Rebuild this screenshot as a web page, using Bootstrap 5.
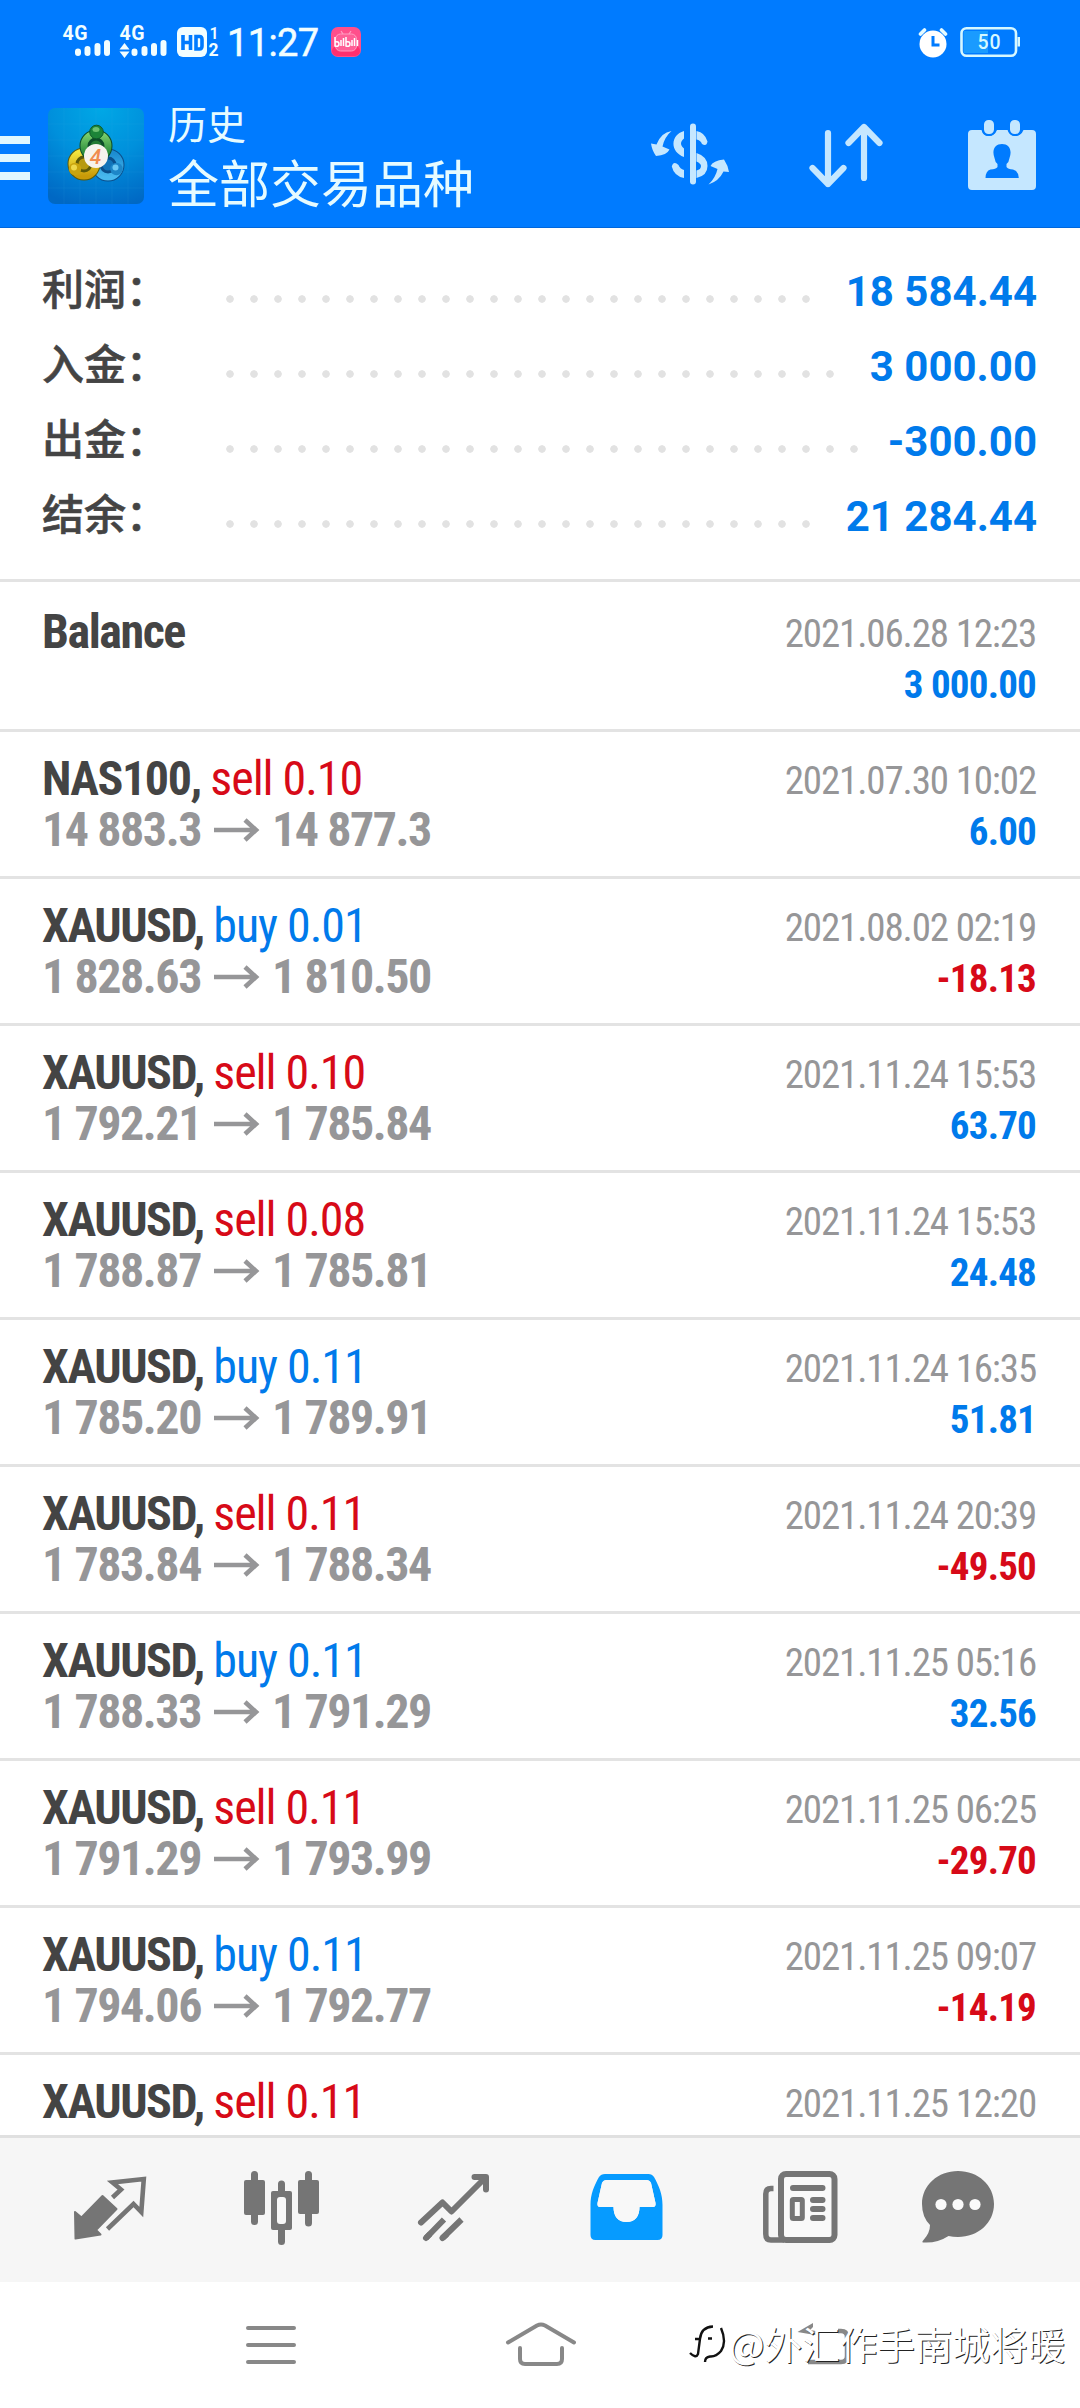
<!DOCTYPE html>
<html lang="zh-CN">
<head>
<meta charset="utf-8">
<meta name="viewport" content="width=device-width, initial-scale=1">
<title>历史</title>
<link href="https://cdn.jsdelivr.net/npm/bootstrap@5.3.0/dist/css/bootstrap.min.css" rel="stylesheet">
<style>
  body { width: 1080px; height: 2408px; overflow: hidden; background: #fff; font-family: Roboto, "Noto Sans CJK SC", sans-serif; }
  svg { display: block; flex: none; }
  .app-head { height: 228px; background: #007bff; border-bottom: 1px solid #0067dc; color: #e6fbff; }
  .status-strip { height: 84px; padding: 10px 56px 0 50px; }
  .tool-strip { height: 143px; }
  .head-text { margin: 10px 0 0 24px; font-family: "Noto Sans CJK SC", sans-serif; }
  .head-small { font-size: 39px; line-height: 56px; }
  .head-large { font-size: 51px; line-height: 62px; }
  .summary { height: 354px; padding: 26px 43px 0 42px; border-bottom: 3px solid #e3e3e3; }
  .sum-line { height: 75px; }
  .sum-label { width: 176px; font: 500 42px/66px "Noto Sans CJK SC", sans-serif; color: #444; -webkit-text-stroke: .6px #444; }
  .leader { height: 8px; margin-top: 41px; background: radial-gradient(circle, #e2e2e2 3.4px, transparent 4.1px) 0 0 / 24px 8px repeat-x; }
  .sum-val { font-size: 42px; line-height: 75px; font-weight: 700; color: #007aeb; }
  .deals { height: 1553px; overflow: hidden; font-family: "Roboto Condensed", Roboto, sans-serif; }
  .deal { padding: 21px 44px 18px 42px; border-bottom: 3px solid #e3e3e3; font-size: 48px; line-height: 51px; letter-spacing: -1.45px; }
  .deal:first-child { padding-top: 24px; }
  .deal-sym { height: 51px; color: #444; font-weight: 700; }
  .deal-sym span { font-weight: 400; letter-spacing: -1.05px; }
  .deal-px { height: 51px; color: #969698; font-weight: 700; }
  .deal-px svg { margin: 0 12px 0 13px; }
  .deal-side { padding-top: 3px; font-size: 39px; }
  .deal-time { color: #969698; letter-spacing: -1.15px; }
  .deal-sum { font-weight: 700; letter-spacing: -.8px; }
  .c-buy { color: #007aeb; }
  .c-sell { color: #d70a18; }
  .tabs { height: 147px; background: #f6f6f6; border-top: 3px solid #e0e0e0; padding: 30px 0 0 68px; }
  .sys-nav { height: 126px; padding-top: 38px; position: relative; }
  .wmark { position: absolute; left: 684px; top: 28px; font: 400 37.6px/66px "Noto Sans CJK SC", sans-serif; color: #fff; text-shadow: 1px 1px 0 #222; }
</style>
<script src="https://cdn.jsdelivr.net/npm/bootstrap@5.3.0/dist/js/bootstrap.bundle.min.js"></script>
</head>
<body>
<svg width="0" height="0" class="position-absolute"><defs>
  <symbol id="arr" viewBox="0 0 46 24"><path d="M0 12H42M31 2L42 12L31 22" fill="none" stroke="#969698" stroke-width="4.6"/></symbol>
</defs></svg>

<header class="app-head">
  <div class="status-strip d-flex justify-content-between">
    <svg width="315" height="60" viewBox="50 10 315 60" fill="#f2feff" font-family="Roboto">
      <text x="62.500" y="40" font-size="19.500" font-weight="700" textLength="25">4G</text>
      <path stroke="#f2feff" stroke-width="6" stroke-linecap="round" d="M78 51.500v1.500M87.500 49v4M97.500 46v7M107 43v10M134.500 51.500v1.500M144.500 49v4M154 46v7M163.500 43v10"/>
      <text x="119.500" y="40" font-size="19.500" font-weight="700" textLength="25">4G</text>
      <path d="M119.500 49.500L124.500 43L129.500 49.500zM119.500 51.500h10L124.500 58z"/>
      <rect x="177" y="27" width="30" height="30" rx="6"/>
      <path fill="none" stroke="#007bff" stroke-width="3.600" d="M183 35v15M190.500 35v15M183 42.500h7.500M196 36.500h3.500q2.500 0 2.500 3v6.500q0 3-2.500 3H196z"/>
      <text x="209.500" y="38.500" font-size="16" font-weight="600">1</text>
      <text x="208.500" y="56" font-size="17.500" font-weight="700">2</text>
      <text x="227" y="56" font-size="38" font-weight="400" stroke="#f2feff" stroke-width=".5" textLength="92">11:27</text>
      <rect x="331" y="27" width="30" height="30" rx="7" fill="#ff4f8b"/>
      <rect x="332" y="46" width="28" height="10" rx="5" fill="#ff2f6e"/>
      <rect x="335.500" y="34" width="21" height="17" rx="5" fill="#ff5f97" stroke="#ff9cc0" stroke-width="1"/>
      <path stroke="#ffa0c4" stroke-width="1.200" d="M341 31l2 3M351 31l-2 3"/>
      <path fill="none" stroke="#fff" stroke-width="1.500" d="M335 37v9q4 1 4-2t-4-2M341 40v6M343.500 38v8M346 37v9q4 1 4-2t-4-2M352 40v6M354.500 38v8M357.500 40v6"/>
    </svg>
    <svg width="106" height="60" viewBox="918 10 106 60" font-family="Roboto">
      <circle cx="933" cy="44" r="13.500" fill="#fff"/>
      <path d="M920.500 34l4-4M945.500 34l-4-4" stroke="#e6fbff" stroke-width="3.600" stroke-linecap="round"/>
      <path d="M933 36v9h6.500" fill="none" stroke="#007bff" stroke-width="3"/>
      <rect x="961.500" y="28.300" width="54.500" height="27.500" rx="5" fill="none" stroke="#d6f8ff" stroke-width="2.600"/>
      <path d="M963.500 31h24.500v22h-24.500z" fill="#1a9bff"/>
      <path d="M1017.500 37h2.500v9.500h-2.500z" fill="#d6f8ff"/>
      <text x="977.500" y="49" font-size="19.500" font-weight="500" fill="#d6f8ff" textLength="23">50</text>
    </svg>
  </div>
  <div class="tool-strip d-flex align-items-start">
    <svg width="30" height="44" viewBox="0 0 30 44" style="margin-top:52px"><path d="M0 0h30v8H0zM0 18h30v8H0zM0 36h30v8H0z" fill="#e0f7ff"/></svg>
    <svg width="96" height="96" viewBox="0 0 96 96" style="margin:24px 0 0 18px">
      <defs>
        <radialGradient id="lb" cx=".55" cy="0" r="1.050"><stop offset="0" stop-color="#00a8e6"/><stop offset=".5" stop-color="#0090dc"/><stop offset="1" stop-color="#0068c4"/></radialGradient>
        <linearGradient id="lg" x2="0" y2="1"><stop stop-color="#7ccf6c"/><stop offset="1" stop-color="#147a2e"/></linearGradient>
        <linearGradient id="ly" x2="0" y2="1"><stop stop-color="#f4e640"/><stop offset="1" stop-color="#c89a08"/></linearGradient>
        <linearGradient id="lc" x2="0" y2="1"><stop stop-color="#1c8cd0"/><stop offset="1" stop-color="#48b8ee"/></linearGradient>
      </defs>
      <rect width="96" height="96" rx="7" fill="url(#lb)"/>
      <path d="M16 0v96M32 0v96M48 0v96M64 0v96M80 0v96M0 16h96M0 32h96M0 48h96M0 64h96M0 80h96" stroke="#3cb8f0" stroke-opacity=".1"/>
      <circle cx="60" cy="57" r="11" fill="#1273b8" stroke="#0a4f8c" stroke-width="11"/>
      <circle cx="60" cy="57" r="12" fill="none" stroke="url(#lc)" stroke-width="7"/>
      <circle cx="36" cy="56" r="11" fill="#b79a10" stroke="#5d5a08" stroke-width="11"/>
      <circle cx="36" cy="56" r="12" fill="none" stroke="url(#ly)" stroke-width="7"/>
      <circle cx="48" cy="38" r="11" fill="#237a34" stroke="#0c4c28" stroke-width="11"/>
      <circle cx="48" cy="38" r="12" fill="none" stroke="url(#lg)" stroke-width="7"/>
      <circle cx="48.500" cy="24" r="6.800" fill="#1c8438" stroke="#0f5a2a"/>
      <ellipse cx="48" cy="21.500" rx="3.500" ry="2.500" fill="#6cc070"/>
      <circle cx="27" cy="61" r="6.200" fill="#c9a40e"/><circle cx="26" cy="59.500" r="3" fill="#eed84a"/>
      <circle cx="68.500" cy="61" r="6.200" fill="#1d86c8"/><circle cx="67.500" cy="59.500" r="3" fill="#6cc8f4"/>
      <circle cx="48" cy="48" r="12" fill="#f6f3ee"/>
      <text x="47.500" y="55.500" font-family="Roboto" font-weight="500" font-style="italic" font-size="21" text-anchor="middle" fill="#f08c50">4</text>
    </svg>
    <div class="head-text flex-grow-1">
      <div class="head-small">历史</div>
      <div class="head-large">全部交易品种</div>
    </div>
    <svg width="390" height="76" viewBox="650 118 390 76" style="margin:34px 40px 0 0" fill="#c5e7ff" stroke-linecap="round">
      <path d="M693 126.500V181.500" stroke="#c5e7ff" stroke-width="6"/>
      <path d="M684 131C670 135 670 152 684 157V148.500C680 145.500 680 141.500 684 138.500zM696.500 131Q705 132.500 707.500 141.500Q706.500 147 702 144Q700.500 140 696.500 139.500zM696.500 153Q707.500 156.500 707.500 166Q707.500 175.500 696.500 178V170.500Q701 169.500 701 166Q701 163.500 696.500 161.500zM684 178Q674 176 671.800 166.500Q673.500 160.500 678.500 165Q680 169 684 170z"/>
      <path d="M671.500 131Q664.500 137 662.500 146.500L669.500 149.500Q667 155 656 156Q652 150.500 651 143.500L656.500 144.500Q661 132.500 671.500 131zM708.500 184.500Q715.500 178 717.500 169L710.500 166Q713 160.500 724 159.500Q728 165.500 729 172L723.500 171.500Q719 181 708.500 184.500z"/>
      <path d="M828 133V184M812.500 168L828 184L843.500 168M864 178V127M848.500 143L864 127L879.500 143" fill="none" stroke="#c5e7ff" stroke-width="6.200" stroke-linejoin="round"/>
      <path d="M972 130H981.500Q983 136 988.500 136Q994.500 136 997 130H1007.500Q1010 136 1015.500 136Q1021 136 1023.500 130H1032Q1036 130 1036 134V186Q1036 190 1032 190H972Q968 190 968 186V134Q968 130 972 130z"/>
      <g stroke="#007bff" stroke-width="2"><rect x="983" y="119" width="12" height="16" rx="5.500"/><rect x="1009" y="119" width="12" height="16" rx="5.500"/></g>
      <path fill="#007bff" d="M1002 144C1009 144 1012.500 150 1009.500 158Q1009 162 1006.500 164V167Q1008 169 1013 169.500Q1018.500 171 1018.800 178H985.500Q985.500 171 990.500 169.500Q996 169 997.500 167V164Q995 162 994.500 158C991.500 150 995 144 1002 144z"/>
    </svg>
  </div>
</header>

<section class="summary">
  <div class="sum-line d-flex align-items-start"><div class="sum-label">利润：</div><div class="leader" style="width:600px"></div><div class="sum-val ms-auto">18 584.44</div></div>
  <div class="sum-line d-flex align-items-start"><div class="sum-label">入金：</div><div class="leader" style="width:624px"></div><div class="sum-val ms-auto">3 000.00</div></div>
  <div class="sum-line d-flex align-items-start"><div class="sum-label">出金：</div><div class="leader" style="width:648px"></div><div class="sum-val ms-auto">-300.00</div></div>
  <div class="sum-line d-flex align-items-start"><div class="sum-label">结余：</div><div class="leader" style="width:600px"></div><div class="sum-val ms-auto">21 284.44</div></div>
</section>

<main class="deals">
  <div class="deal d-flex justify-content-between"><div><div class="deal-sym">Balance</div><div class="deal-px"></div></div><div class="deal-side text-end"><div class="deal-time">2021.06.28 12:23</div><div class="deal-sum c-buy">3 000.00</div></div></div>
  <div class="deal d-flex justify-content-between"><div><div class="deal-sym">NAS100, <span class="c-sell">sell 0.10</span></div><div class="deal-px d-flex align-items-center">14 883.3<svg width="46" height="24"><use href="#arr"/></svg>14 877.3</div></div><div class="deal-side text-end"><div class="deal-time">2021.07.30 10:02</div><div class="deal-sum c-buy">6.00</div></div></div>
  <div class="deal d-flex justify-content-between"><div><div class="deal-sym">XAUUSD, <span class="c-buy">buy 0.01</span></div><div class="deal-px d-flex align-items-center">1 828.63<svg width="46" height="24"><use href="#arr"/></svg>1 810.50</div></div><div class="deal-side text-end"><div class="deal-time">2021.08.02 02:19</div><div class="deal-sum c-sell">-18.13</div></div></div>
  <div class="deal d-flex justify-content-between"><div><div class="deal-sym">XAUUSD, <span class="c-sell">sell 0.10</span></div><div class="deal-px d-flex align-items-center">1 792.21<svg width="46" height="24"><use href="#arr"/></svg>1 785.84</div></div><div class="deal-side text-end"><div class="deal-time">2021.11.24 15:53</div><div class="deal-sum c-buy">63.70</div></div></div>
  <div class="deal d-flex justify-content-between"><div><div class="deal-sym">XAUUSD, <span class="c-sell">sell 0.08</span></div><div class="deal-px d-flex align-items-center">1 788.87<svg width="46" height="24"><use href="#arr"/></svg>1 785.81</div></div><div class="deal-side text-end"><div class="deal-time">2021.11.24 15:53</div><div class="deal-sum c-buy">24.48</div></div></div>
  <div class="deal d-flex justify-content-between"><div><div class="deal-sym">XAUUSD, <span class="c-buy">buy 0.11</span></div><div class="deal-px d-flex align-items-center">1 785.20<svg width="46" height="24"><use href="#arr"/></svg>1 789.91</div></div><div class="deal-side text-end"><div class="deal-time">2021.11.24 16:35</div><div class="deal-sum c-buy">51.81</div></div></div>
  <div class="deal d-flex justify-content-between"><div><div class="deal-sym">XAUUSD, <span class="c-sell">sell 0.11</span></div><div class="deal-px d-flex align-items-center">1 783.84<svg width="46" height="24"><use href="#arr"/></svg>1 788.34</div></div><div class="deal-side text-end"><div class="deal-time">2021.11.24 20:39</div><div class="deal-sum c-sell">-49.50</div></div></div>
  <div class="deal d-flex justify-content-between"><div><div class="deal-sym">XAUUSD, <span class="c-buy">buy 0.11</span></div><div class="deal-px d-flex align-items-center">1 788.33<svg width="46" height="24"><use href="#arr"/></svg>1 791.29</div></div><div class="deal-side text-end"><div class="deal-time">2021.11.25 05:16</div><div class="deal-sum c-buy">32.56</div></div></div>
  <div class="deal d-flex justify-content-between"><div><div class="deal-sym">XAUUSD, <span class="c-sell">sell 0.11</span></div><div class="deal-px d-flex align-items-center">1 791.29<svg width="46" height="24"><use href="#arr"/></svg>1 793.99</div></div><div class="deal-side text-end"><div class="deal-time">2021.11.25 06:25</div><div class="deal-sum c-sell">-29.70</div></div></div>
  <div class="deal d-flex justify-content-between"><div><div class="deal-sym">XAUUSD, <span class="c-buy">buy 0.11</span></div><div class="deal-px d-flex align-items-center">1 794.06<svg width="46" height="24"><use href="#arr"/></svg>1 792.77</div></div><div class="deal-side text-end"><div class="deal-time">2021.11.25 09:07</div><div class="deal-sum c-sell">-14.19</div></div></div>
  <div class="deal d-flex justify-content-between"><div><div class="deal-sym">XAUUSD, <span class="c-sell">sell 0.11</span></div><div class="deal-px d-flex align-items-center">1 788.57<svg width="46" height="24"><use href="#arr"/></svg>1 788.67</div></div><div class="deal-side text-end"><div class="deal-time">2021.11.25 12:20</div><div class="deal-sum c-buy">&nbsp;</div></div></div>
</main>

<nav class="tabs d-flex">
  <svg width="84" height="80" viewBox="68 2168 84 80" fill="#757575">
    <path stroke="#757575" stroke-width="2" stroke-linejoin="round" d="M75 2212L81.500 2217.500L102.500 2196L116.500 2209L96 2230L100.500 2234.500L75.500 2238.500z"/>
    <path fill="none" stroke="#757575" stroke-width="4.600" d="M112.500 2197.500L121 2189.500L112.500 2182.500L143.800 2179L141.300 2212L133.500 2204L107.500 2229"/>
  </svg>
  <svg width="78" height="80" viewBox="242 2168 78 80" style="margin-left:90px" fill="#757575">
    <path stroke="#757575" stroke-width="7" stroke-linecap="round" d="M254.500 2174.500V2221.500M308.500 2174.500V2223M281.500 2184V2241.500"/>
    <rect x="244" y="2180" width="21" height="35" rx="2"/><rect x="298" y="2180" width="21" height="34" rx="2"/><rect x="271" y="2191" width="21" height="39" rx="2"/>
    <rect x="277" y="2197" width="9" height="27" rx="3" fill="#f8f8f8"/>
  </svg>
  <svg width="76" height="80" viewBox="416 2168 76 80" style="margin-left:96px" fill="none" stroke="#757575" stroke-width="6" stroke-linejoin="round">
    <path stroke-linecap="round" d="M421 2222.500L442.500 2202.500L451.500 2211.500L485 2178M474.500 2177H486V2189.500"/>
    <path stroke-linecap="round" d="M426 2238L429 2235M442.500 2238L446 2235"/><path d="M426 2238L444 2219.500M442.500 2238L461.500 2219.500"/>
    <path d="M478 2177H487V2187z" fill="#757575" stroke="none"/>
  </svg>
  <svg width="76" height="80" viewBox="588 2168 76 80" style="margin-left:96px">
    <path fill="#069bff" fill-rule="evenodd" d="M605 2174H648.500Q652 2174 654 2177C659 2186 662.500 2194 662.500 2205V2235Q662.500 2240 657.500 2240H595.500Q590.500 2240 590.500 2235V2205C590.500 2194 594 2186 599 2177Q601 2174 605 2174zM606.500 2180Q603.500 2180 602 2183L597.500 2203Q597 2207 600 2207H613.500Q613.500 2221.500 626.500 2222Q639.500 2221.500 639.500 2207H653Q656 2207 655.500 2203L651 2183Q649.500 2180 646.500 2180z"/>
    <path fill="#f8f8f8" d="M606.500 2180Q603.500 2180 602 2183L597.500 2203Q597 2207 600 2207H613.500Q613.500 2221.500 626.500 2222Q639.500 2221.500 639.500 2207H653Q656 2207 655.500 2203L651 2183Q649.500 2180 646.500 2180z"/>
  </svg>
  <svg width="78" height="80" viewBox="761 2168 78 80" style="margin-left:97px" fill="none" stroke="#757575" stroke-width="6">
    <rect x="781" y="2174" width="53.500" height="66" rx="5" fill="#f9f9f9"/>
    <path d="M773.500 2188.500H771Q765.800 2188.500 765.800 2194V2234Q765.800 2240 771 2240H784" stroke-width="5.500"/>
    <path d="M793 2188H822.500M813 2200H822.500M813 2209H822.500M813 2218H822.500" stroke-linecap="round"/>
    <rect x="792.300" y="2199.500" width="10" height="19" rx="1" stroke-width="5"/>
  </svg>
  <svg width="76" height="80" viewBox="920 2168 76 80" style="margin-left:81px">
    <path fill="#757575" d="M958 2171C978 2171 994 2185 994 2204C994 2223 978 2237 958 2237Q953 2237 948.500 2236Q937 2243.500 923 2242.500Q921.500 2242 923.500 2240Q930 2233 930 2225Q922 2217 922 2204C922 2185 938 2171 958 2171z"/>
    <g fill="#fafafa"><circle cx="941" cy="2204.500" r="5.600"/><circle cx="958" cy="2204.500" r="5.600"/><circle cx="975" cy="2204.500" r="5.600"/></g>
  </svg>
</nav>

<footer class="sys-nav d-flex">
  <svg width="56" height="50" viewBox="243 2320 56 50" style="margin-left:243px"><path stroke="#888" stroke-width="4" stroke-linecap="round" d="M248 2328H294M248 2345H294M248 2362H294"/></svg>
  <svg width="72" height="50" viewBox="505 2320 72 50" style="margin-left:206px"><path fill="none" stroke="#888" stroke-width="4" stroke-linecap="round" stroke-linejoin="round" d="M508 2342.500L537 2325.500Q541 2323.500 545 2325.500L574 2342.500M520 2348V2359Q520 2364 525 2364H557Q562 2364 562 2359V2348"/></svg>
  <svg width="54" height="50" viewBox="797 2320 54 50" style="margin-left:220px"><path fill="none" stroke="#888" stroke-width="4.500" d="M808 2362H841Q847 2362 847 2356V2337Q847 2331 841 2331H838"/><path fill="#888" d="M797.500 2332L813 2323V2327L810 2330L819 2331.500L818 2335.500z"/></svg>
  <div class="wmark d-flex align-items-center">
    <svg width="45" height="48" viewBox="686 2328 45 48"><path transform="translate(1 1)" fill="none" stroke="#111" stroke-width="2.400" d="M691 2361Q697 2367 699 2362L701 2347H696M701 2347Q702 2335 714 2334.500M709 2346.500H713M722 2336Q728 2350 722 2359Q717 2365 711 2364.500Q706 2365 706 2370"/></svg>
    <span>@外汇作手南城将暖</span>
  </div>
</footer>
</body>
</html>
